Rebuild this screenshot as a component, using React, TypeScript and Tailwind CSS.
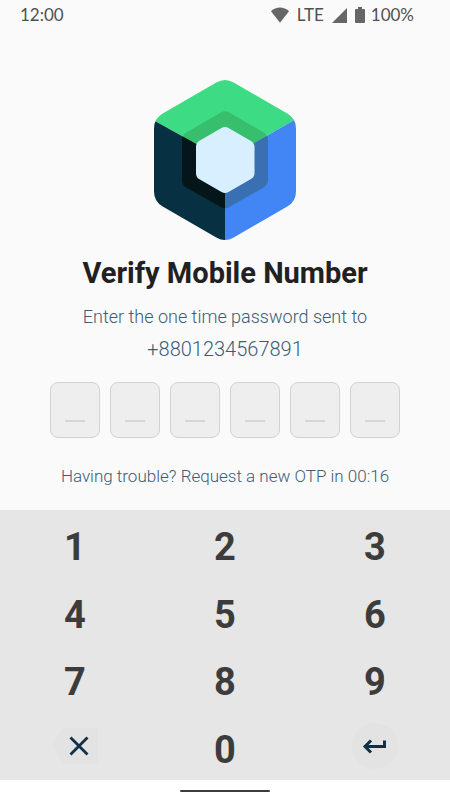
import React from 'react'

const StatusBar = () => {
  return (
    <header className="flex h-[30px] items-center justify-between pl-5 pr-9 font-['Lato',sans-serif] text-[17px] leading-5 text-[#505050]">
      <span>12:00</span>
      <div className="flex items-center">
        <svg viewBox="0 0 18 16" className="mr-2 h-4 w-[18px]" fill="#666">
          <path d="M9 15.8 0 4.2C5.2-.8 12.8-.8 18 4.2Z" />
        </svg>
        <span>LTE</span>
        <svg viewBox="0 0 15 15" className="ml-2 h-[15px] w-[15px]" fill="#666">
          <path d="M15 0v15H0Z" />
        </svg>
        <svg viewBox="0 0 10 16" className="mr-1.5 ml-2 h-4 w-2.5" fill="#666">
          <path d="M3 0h4v2h2q1 0 1 1v12q0 1-1 1H1q-1 0-1-1V3q0-1 1-1h2Z" />
        </svg>
        <span>100%</span>
      </div>
    </header>
  )
}

const Logo = () => {
  return (
    <svg viewBox="8 9 144 162" className="h-[162px] w-[144px]" role="img" aria-label="Compose">
      <defs>
        <clipPath id="outer">
          <path d="M71.3 12.5Q80 7.5 88.7 12.5L142.3 43.5Q151 48.5 151 58.5V121.5Q151 131.5 142.3 136.5L88.7 167.5Q80 172.5 71.3 167.5L17.7 136.5Q9 131.5 9 121.5V58.5Q9 48.5 17.7 43.5Z" />
        </clipPath>
        <clipPath id="middle">
          <path d="M75.7 42.5Q80 40 84.3 42.5L118.7 62.5Q123 65 123 70V110Q123 115 118.7 117.5L84.3 137Q80 139.5 75.7 137L41.3 117.5Q37 115 37 110V70Q37 65 41.3 62.5Z" />
        </clipPath>
      </defs>
      <g clipPath="url(#outer)">
        <path fill="#3ddc84" d="M0 0H160V43.8L80 90 0 45.5Z" />
        <path fill="#073042" d="M0 45.5 80 90V180H0Z" />
        <path fill="#4285f4" d="M160 43.8 80 90V180H160Z" />
      </g>
      <g clipPath="url(#middle)">
        <path fill="#37bf6e" d="M0 0H160V43.8L80 90 0 45.5Z" />
        <path fill="#041619" d="M0 45.5 80 90V180H0Z" />
        <path fill="#3870b2" d="M160 43.8 80 90V180H160Z" />
      </g>
      <path fill="#d7efff" d="M76.5 58Q80 56 83.5 58L106 71Q109.5 73 109.5 77V103Q109.5 107 106 109L83.5 122Q80 124 76.5 122L54 109Q51 107 51 103V77Q51 73 54 71Z" />
    </svg>
  )
}

const keys = ['1', '2', '3', '4', '5', '6', '7', '8', '9']

const App = () => {
  return (
    <div className="flex min-h-screen flex-col bg-[#fafafa] font-['Roboto',sans-serif]">
      <StatusBar />

      <main className="flex flex-1 flex-col items-center pt-[49px] text-center text-[#3a5c75]">
        <Logo />
        <h1 className="mt-3 text-[29px] leading-10 font-bold text-[#212121]">Verify Mobile Number</h1>
        <p className="mt-2 text-lg leading-8 font-light">
          Enter the one time password sent to
          <span className="block text-xl leading-8">+8801234567891</span>
        </p>

        <form className="mt-[17px] flex gap-2.5">
          {[1, 2, 3, 4, 5, 6].map((n) => (
            <label
              key={n}
              className="flex h-14 w-[50px] flex-col items-center rounded-lg border border-[#d2d2d2] bg-[#eee] pb-[15px]"
            >
              <input
                aria-label={`Digit ${n}`}
                inputMode="numeric"
                maxLength={1}
                className="min-h-0 w-full flex-1 bg-transparent text-center text-xl outline-none"
              />
              <span className="h-0.5 w-5 bg-[#d6d6d6]" />
            </label>
          ))}
        </form>

        <p className="mt-6 text-[17px] leading-7 font-light">Having trouble? Request a new OTP in 00:16</p>
      </main>

      <div className="grid h-[270px] grid-cols-3 grid-rows-4 bg-[#e6e6e6] text-[38px] font-bold text-[#3c3c3c]">
        {keys.map((key) => (
          <button key={key} type="button" className="pt-2">
            {key}
          </button>
        ))}
        <button type="button" aria-label="Clear" className="flex items-center justify-center">
          <svg viewBox="0 0 46 36" className="h-9 w-[46px]">
            <path fill="#e3e3e3" d="M0 18 9 3q2-3 5-3h29q3 0 3 3v30q0 3-3 3H14q-3 0-5-3Z" />
            <path stroke="#0f3048" strokeWidth="2.8" d="m18.5 9.5 17 17M35.5 9.5l-17 17" />
          </svg>
        </button>
        <button type="button" className="pt-2">
          0
        </button>
        <button type="button" aria-label="Enter" className="flex items-center justify-center">
          <svg viewBox="0 0 46 46" className="h-[46px] w-[46px]" fill="none">
            <circle cx="23" cy="23" r="23" fill="#e3e3e3" />
            <path stroke="#0f3048" strokeWidth="3" d="M32.5 17.5v6H13.5M19 17.5l-6 6 6 6" />
          </svg>
        </button>
      </div>

      <footer className="flex h-5 items-center justify-center bg-white pt-0.5">
        <div className="h-0.5 w-[90px] rounded-full bg-[#3c3c3c]" />
      </footer>
    </div>
  )
}

export default App
